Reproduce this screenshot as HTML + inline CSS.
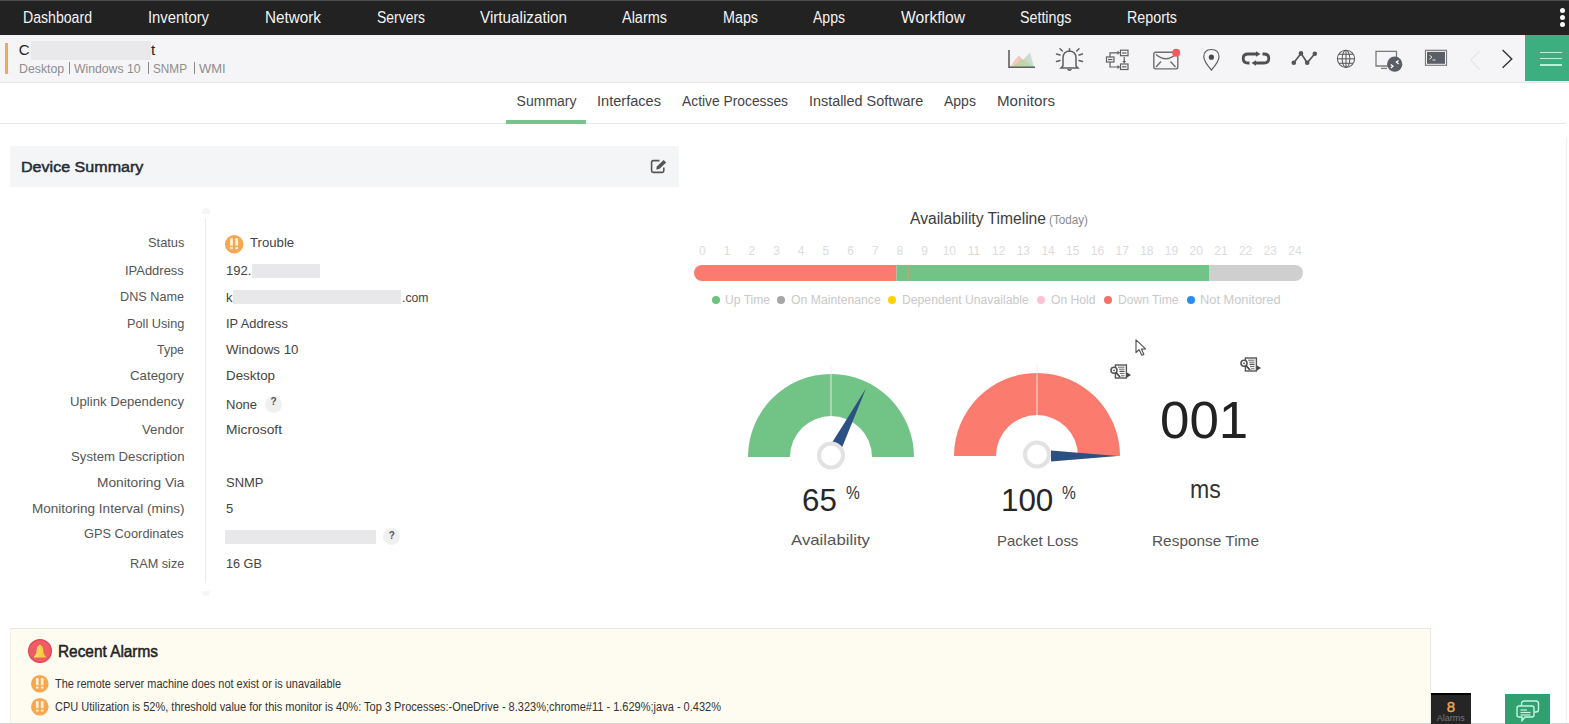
<!DOCTYPE html><html><head><meta charset="utf-8"><style>
html,body{margin:0;padding:0;}
body{width:1569px;height:724px;overflow:hidden;position:relative;background:#fff;font-family:"Liberation Sans",sans-serif;}
.t{position:absolute;white-space:nowrap;line-height:1;transform-origin:0 0;}
.r{position:absolute;}
svg{position:absolute;overflow:visible;}
</style></head><body>
<div class="r" style="left:0px;top:0px;width:1569px;height:35px;background:#222222;"></div>
<div class="r" style="left:0px;top:0px;width:1569px;height:1px;background:#4d4d4d;"></div>
<div class="t" style="left:23.00px;top:10.46px;font-size:16px;color:#f2f2f2;transform:scaleX(0.8815);">Dashboard</div>
<div class="t" style="left:148.00px;top:10.46px;font-size:16px;color:#f2f2f2;transform:scaleX(0.9269);">Inventory</div>
<div class="t" style="left:265.00px;top:10.46px;font-size:16px;color:#f2f2f2;transform:scaleX(0.9543);">Network</div>
<div class="t" style="left:377.00px;top:10.46px;font-size:16px;color:#f2f2f2;transform:scaleX(0.8707);">Servers</div>
<div class="t" style="left:480.00px;top:10.46px;font-size:16px;color:#f2f2f2;transform:scaleX(0.9527);">Virtualization</div>
<div class="t" style="left:622.00px;top:10.46px;font-size:16px;color:#f2f2f2;transform:scaleX(0.9039);">Alarms</div>
<div class="t" style="left:723.00px;top:10.46px;font-size:16px;color:#f2f2f2;transform:scaleX(0.8945);">Maps</div>
<div class="t" style="left:813.00px;top:10.46px;font-size:16px;color:#f2f2f2;transform:scaleX(0.8774);">Apps</div>
<div class="t" style="left:901.00px;top:10.46px;font-size:16px;color:#f2f2f2;transform:scaleX(0.9772);">Workflow</div>
<div class="t" style="left:1019.50px;top:10.46px;font-size:16px;color:#f2f2f2;transform:scaleX(0.8908);">Settings</div>
<div class="t" style="left:1127.00px;top:10.46px;font-size:16px;color:#f2f2f2;transform:scaleX(0.8925);">Reports</div>
<div class="r" style="left:1559.7px;top:7.8px;width:5.4px;height:5.4px;border-radius:50%;background:#fafafa"></div>
<div class="r" style="left:1559.7px;top:15.0px;width:5.4px;height:5.4px;border-radius:50%;background:#fafafa"></div>
<div class="r" style="left:1559.7px;top:21.9px;width:5.4px;height:5.4px;border-radius:50%;background:#fafafa"></div>
<div class="r" style="left:0px;top:35px;width:1569px;height:47px;background:#f5f5f7;"></div>
<div class="r" style="left:0px;top:82px;width:1569px;height:1px;background:#e6e6e8;"></div>
<div class="r" style="left:5px;top:43px;width:3px;height:31px;background:#f2a950;"></div>
<div class="t" style="left:18.70px;top:42.30px;font-size:15px;color:#222;">C</div>
<div class="r" style="left:31px;top:41px;width:120px;height:19px;background:#e9e9eb;border-radius:1px;"></div>
<div class="t" style="left:151.00px;top:42.30px;font-size:15px;color:#222;">t</div>
<div class="t" style="left:18.70px;top:61.70px;font-size:13px;color:#8e8e8e;transform:scaleX(0.9478);">Desktop</div>
<div class="t" style="left:73.90px;top:61.70px;font-size:13px;color:#8e8e8e;transform:scaleX(0.9391);">Windows 10</div>
<div class="t" style="left:153.00px;top:61.70px;font-size:13px;color:#8e8e8e;transform:scaleX(0.9052);">SNMP</div>
<div class="t" style="left:198.90px;top:61.70px;font-size:13px;color:#8e8e8e;">WMI</div>
<div class="r" style="left:68.8px;top:62px;width:1.2px;height:12px;background:#8a8a8a;"></div>
<div class="r" style="left:148px;top:62px;width:1.2px;height:12px;background:#8a8a8a;"></div>
<div class="r" style="left:194px;top:62px;width:1.2px;height:12px;background:#8a8a8a;"></div>
<div class="t" style="left:516.60px;top:94.35px;font-size:14px;color:#444;">Summary</div>
<div class="t" style="left:597.00px;top:94.35px;font-size:14px;color:#444;transform:scaleX(1.0410);">Interfaces</div>
<div class="t" style="left:681.50px;top:94.35px;font-size:14px;color:#444;transform:scaleX(0.9872);">Active Processes</div>
<div class="t" style="left:808.70px;top:94.35px;font-size:14px;color:#444;transform:scaleX(1.0271);">Installed Software</div>
<div class="t" style="left:944.00px;top:94.35px;font-size:14px;color:#444;">Apps</div>
<div class="t" style="left:996.50px;top:94.35px;font-size:14px;color:#444;transform:scaleX(1.0804);">Monitors</div>
<div class="r" style="left:0px;top:123px;width:1566px;height:1px;background:#e6e6e6;"></div>
<div class="r" style="left:506px;top:120px;width:80px;height:4px;background:#74c48b;"></div>
<div class="r" style="left:10px;top:146px;width:669px;height:41px;background:#f4f5f7;"></div>
<div class="t" style="left:21.40px;top:159.38px;font-size:15.5px;color:#262b33;transform:scaleX(1.0373);-webkit-text-stroke:0.5px #262b33;">Device Summary</div>
<div class="r" style="left:205px;top:218px;width:1px;height:365px;background:#ededed;"></div>
<div class="r" style="left:201.5px;top:208px;width:8px;height:6px;border-radius:4px 4px 0 0;background:#f6f6f6"></div>
<div class="r" style="left:201.5px;top:591px;width:8px;height:5px;border-radius:0 0 4px 4px;background:#f6f6f6"></div>
<div class="t" style="left:147.60px;top:235.60px;font-size:13px;color:#555;transform:scaleX(0.9877);">Status</div>
<div class="t" style="left:125.20px;top:264.20px;font-size:13px;color:#555;transform:scaleX(0.9964);">IPAddress</div>
<div class="t" style="left:120.00px;top:290.20px;font-size:13px;color:#555;transform:scaleX(0.9736);">DNS Name</div>
<div class="t" style="left:126.70px;top:316.80px;font-size:13px;color:#555;transform:scaleX(0.9790);">Poll Using</div>
<div class="t" style="left:157.00px;top:342.70px;font-size:13px;color:#555;transform:scaleX(0.9580);">Type</div>
<div class="t" style="left:130.00px;top:368.50px;font-size:13px;color:#555;transform:scaleX(1.0237);">Category</div>
<div class="t" style="left:70.00px;top:395.00px;font-size:13px;color:#555;transform:scaleX(1.0112);">Uplink Dependency</div>
<div class="t" style="left:142.00px;top:423.20px;font-size:13px;color:#555;transform:scaleX(1.0193);">Vendor</div>
<div class="t" style="left:70.50px;top:449.90px;font-size:13px;color:#555;transform:scaleX(1.0136);">System Description</div>
<div class="t" style="left:96.50px;top:475.70px;font-size:13px;color:#555;transform:scaleX(1.0559);">Monitoring Via</div>
<div class="t" style="left:31.50px;top:502.40px;font-size:13px;color:#555;transform:scaleX(1.0398);">Monitoring Interval (mins)</div>
<div class="t" style="left:84.30px;top:527.20px;font-size:13px;color:#555;transform:scaleX(0.9855);">GPS Coordinates</div>
<div class="t" style="left:129.70px;top:556.50px;font-size:13px;color:#555;transform:scaleX(0.9763);">RAM size</div>
<div class="t" style="left:249.60px;top:235.60px;font-size:13px;color:#444;transform:scaleX(1.0138);">Trouble</div>
<div class="t" style="left:226.00px;top:264.20px;font-size:13px;color:#444;">192.</div>
<div class="t" style="left:226.00px;top:290.70px;font-size:13px;color:#444;">k</div>
<div class="t" style="left:402.00px;top:290.70px;font-size:13px;color:#444;transform:scaleX(0.9407);">.com</div>
<div class="t" style="left:226.00px;top:316.80px;font-size:13px;color:#444;transform:scaleX(0.9867);">IP Address</div>
<div class="t" style="left:226.00px;top:342.70px;font-size:13px;color:#444;transform:scaleX(1.0239);">Windows 10</div>
<div class="t" style="left:226.00px;top:368.50px;font-size:13px;color:#444;transform:scaleX(1.0275);">Desktop</div>
<div class="t" style="left:226.00px;top:397.80px;font-size:13px;color:#444;">None</div>
<div class="t" style="left:226.00px;top:423.20px;font-size:13px;color:#444;transform:scaleX(1.0620);">Microsoft</div>
<div class="t" style="left:225.50px;top:475.70px;font-size:13px;color:#444;transform:scaleX(0.9957);">SNMP</div>
<div class="t" style="left:226.00px;top:502.40px;font-size:13px;color:#444;">5</div>
<div class="t" style="left:226.00px;top:556.50px;font-size:13px;color:#444;transform:scaleX(0.9714);">16 GB</div>
<div class="r" style="left:252px;top:264px;width:68px;height:14px;background:#e8e8ea;"></div>
<div class="r" style="left:233px;top:290px;width:168px;height:14px;background:#e8e8ea;"></div>
<div class="r" style="left:225px;top:530px;width:151px;height:14px;background:#e8e8ea;"></div>
<div class="r" style="left:265.0px;top:395.7px;width:17.0px;height:17.0px;border-radius:50%;background:#f0f0f0"></div>
<div class="t" style="left:270.45px;top:397.34px;font-size:10px;color:#555;font-weight:bold;">?</div>
<div class="r" style="left:383.2px;top:527.9px;width:17.0px;height:17.0px;border-radius:50%;background:#f0f0f0"></div>
<div class="t" style="left:388.65px;top:531.13px;font-size:10px;color:#555;font-weight:bold;">?</div>
<svg style="left:225.4px;top:234.6px" width="18.4" height="18.4" viewBox="0 0 20 20"><circle cx="10" cy="10" r="10" fill="#f7a74f"/><rect x="5.6" y="3.6" width="3" height="8" fill="#fff2d8"/><rect x="11.2" y="3.6" width="3" height="8" fill="#fff2d8"/><rect x="5.6" y="13.2" width="3" height="2.2" fill="#fff2d8"/><rect x="11.2" y="13.2" width="3" height="2.2" fill="#fff2d8"/></svg>
<svg style="left:650px;top:159px" width="19" height="15" viewBox="0 0 19 15"><path d="M9.5 1.6 H3.2 Q1.6 1.6 1.6 3.2 V11.8 Q1.6 13.4 3.2 13.4 H12.2 Q13.8 13.4 13.8 11.8 V8.5" fill="none" stroke="#555" stroke-width="1.6"/><path d="M6.2 10.6 L6.8 7.6 L13.6 0.9 L16.2 3.4 L9.3 10.1 Z" fill="#555"/></svg>
<div class="t" style="left:909.50px;top:210.96px;font-size:16px;color:#3d3d3d;transform:scaleX(0.9761);">Availability Timeline</div>
<div class="t" style="left:1049.00px;top:214.34px;font-size:12px;color:#8a8a8a;transform:scaleX(0.9746);">(Today)</div>
<div class="t" style="left:699.06px;top:244.54px;font-size:12px;color:#dcdcdc;">0</div>
<div class="t" style="left:723.75px;top:244.54px;font-size:12px;color:#dcdcdc;">1</div>
<div class="t" style="left:748.44px;top:244.54px;font-size:12px;color:#dcdcdc;">2</div>
<div class="t" style="left:773.13px;top:244.54px;font-size:12px;color:#dcdcdc;">3</div>
<div class="t" style="left:797.82px;top:244.54px;font-size:12px;color:#dcdcdc;">4</div>
<div class="t" style="left:822.51px;top:244.54px;font-size:12px;color:#dcdcdc;">5</div>
<div class="t" style="left:847.20px;top:244.54px;font-size:12px;color:#dcdcdc;">6</div>
<div class="t" style="left:871.89px;top:244.54px;font-size:12px;color:#dcdcdc;">7</div>
<div class="t" style="left:896.58px;top:244.54px;font-size:12px;color:#dcdcdc;">8</div>
<div class="t" style="left:921.27px;top:244.54px;font-size:12px;color:#dcdcdc;">9</div>
<div class="t" style="left:942.63px;top:244.54px;font-size:12px;color:#dcdcdc;">10</div>
<div class="t" style="left:967.76px;top:244.54px;font-size:12px;color:#dcdcdc;">11</div>
<div class="t" style="left:992.01px;top:244.54px;font-size:12px;color:#dcdcdc;">12</div>
<div class="t" style="left:1016.70px;top:244.54px;font-size:12px;color:#dcdcdc;">13</div>
<div class="t" style="left:1041.39px;top:244.54px;font-size:12px;color:#dcdcdc;">14</div>
<div class="t" style="left:1066.08px;top:244.54px;font-size:12px;color:#dcdcdc;">15</div>
<div class="t" style="left:1090.77px;top:244.54px;font-size:12px;color:#dcdcdc;">16</div>
<div class="t" style="left:1115.46px;top:244.54px;font-size:12px;color:#dcdcdc;">17</div>
<div class="t" style="left:1140.15px;top:244.54px;font-size:12px;color:#dcdcdc;">18</div>
<div class="t" style="left:1164.84px;top:244.54px;font-size:12px;color:#dcdcdc;">19</div>
<div class="t" style="left:1189.53px;top:244.54px;font-size:12px;color:#dcdcdc;">20</div>
<div class="t" style="left:1214.22px;top:244.54px;font-size:12px;color:#dcdcdc;">21</div>
<div class="t" style="left:1238.91px;top:244.54px;font-size:12px;color:#dcdcdc;">22</div>
<div class="t" style="left:1263.60px;top:244.54px;font-size:12px;color:#dcdcdc;">23</div>
<div class="t" style="left:1288.29px;top:244.54px;font-size:12px;color:#dcdcdc;">24</div>
<svg style="left:694px;top:265px" width="609" height="16" viewBox="0 0 609 16"><defs><clipPath id="bc"><rect x="0" y="0" width="609" height="16" rx="8"/></clipPath></defs><g clip-path="url(#bc)"><rect x="0" y="0" width="202.5" height="16" fill="#fa7b6f"/><rect x="202.5" y="0" width="313" height="16" fill="#72c386"/><rect x="213.5" y="0" width="1.2" height="16" fill="#d99a70"/><rect x="515.3" y="0" width="94" height="16" fill="#cfcfcf"/></g></svg>
<div class="r" style="left:711.7px;top:296px;width:8px;height:8px;border-radius:50%;background:#6cc17f"></div>
<div class="t" style="left:724.90px;top:293.84px;font-size:12px;color:#c9c9c9;transform:scaleX(1.0094);">Up Time</div>
<div class="r" style="left:777.4px;top:296px;width:8px;height:8px;border-radius:50%;background:#a6a6a6"></div>
<div class="t" style="left:791.20px;top:293.84px;font-size:12px;color:#c9c9c9;transform:scaleX(1.0198);">On Maintenance</div>
<div class="r" style="left:888.0px;top:296px;width:8px;height:8px;border-radius:50%;background:#ffd400"></div>
<div class="t" style="left:902.30px;top:293.84px;font-size:12px;color:#c9c9c9;transform:scaleX(1.0155);">Dependent Unavailable</div>
<div class="r" style="left:1037.0px;top:296px;width:8px;height:8px;border-radius:50%;background:#ffc3d3"></div>
<div class="t" style="left:1050.60px;top:293.84px;font-size:12px;color:#c9c9c9;transform:scaleX(1.0086);">On Hold</div>
<div class="r" style="left:1103.7px;top:296px;width:8px;height:8px;border-radius:50%;background:#f4706a"></div>
<div class="t" style="left:1117.50px;top:293.84px;font-size:12px;color:#c9c9c9;transform:scaleX(1.0080);">Down Time</div>
<div class="r" style="left:1187.0px;top:296px;width:8px;height:8px;border-radius:50%;background:#2a8ef0"></div>
<div class="t" style="left:1200.00px;top:293.84px;font-size:12px;color:#c9c9c9;transform:scaleX(1.0694);">Not Monitored</div>
<svg style="left:730.5px;top:361.6px" width="200" height="110" viewBox="0 0 200 110"><path d="M17 95 A83 83 0 0 1 183 95 L141 95 A41 41 0 0 0 59 95 Z" fill="#72c386"/><line x1="100" y1="3" x2="100" y2="54" stroke="#f0f0f0" stroke-width="1" opacity="0.9"/><path d="M101.46 80.03 L134.96 26.39 L111.26 85.02 Z" fill="#2d5082"/><circle cx="100" cy="93.5" r="12" fill="#fff" stroke="#e2e2e2" stroke-width="4"/></svg>
<svg style="left:937.3px;top:361.4px" width="200" height="110" viewBox="0 0 200 110"><path d="M17 95 A83 83 0 0 1 183 95 L141 95 A41 41 0 0 0 59 95 Z" fill="#fb7b6f"/><line x1="100" y1="3" x2="100" y2="54" stroke="#f0f0f0" stroke-width="1" opacity="0.9"/><path d="M114.00 89.50 L181.00 95.00 L114.00 100.50 Z" fill="#2d5082"/><circle cx="100" cy="93.5" r="12" fill="#fff" stroke="#e2e2e2" stroke-width="4"/></svg>
<div class="t" style="left:802.40px;top:484.31px;font-size:32px;color:#262626;transform:scaleX(0.9777);">65</div>
<div class="t" style="left:846.00px;top:484.26px;font-size:18px;color:#333;transform:scaleX(0.8623);">%</div>
<div class="t" style="left:1001.00px;top:484.31px;font-size:32px;color:#262626;transform:scaleX(0.9795);">100</div>
<div class="t" style="left:1062.40px;top:484.26px;font-size:18px;color:#333;transform:scaleX(0.8623);">%</div>
<div class="t" style="left:791.30px;top:532.30px;font-size:15px;color:#555;transform:scaleX(1.1191);">Availability</div>
<div class="t" style="left:996.70px;top:532.70px;font-size:15px;color:#555;transform:scaleX(0.9950);">Packet Loss</div>
<div class="t" style="left:1160.30px;top:393.98px;font-size:52px;color:#222;transform:scaleX(1.0177);">001</div>
<div class="t" style="left:1189.80px;top:476.29px;font-size:26px;color:#333;transform:scaleX(0.8887);">ms</div>
<div class="t" style="left:1151.70px;top:533.20px;font-size:15px;color:#555;transform:scaleX(1.0267);">Response Time</div>
<svg style="left:1109.5px;top:364px" width="22" height="16" viewBox="0 0 22 16"><rect x="5.4" y="1" width="11" height="13" fill="#fff" stroke="#555" stroke-width="1.4"/><g stroke="#555" stroke-width="0.9"><line x1="8" y1="3.2" x2="14.5" y2="3.2"/><line x1="9" y1="5.2" x2="14.5" y2="5.2"/><line x1="9.5" y1="7.4" x2="14.5" y2="7.4" stroke-width="1.4"/><line x1="10" y1="9.6" x2="14.5" y2="9.6"/><line x1="11" y1="11.8" x2="14.5" y2="11.8"/></g><circle cx="4" cy="6.3" r="3" fill="#fff" stroke="#555" stroke-width="1.6"/><circle cx="4" cy="6.3" r="0.9" fill="#555"/><line x1="6" y1="8.5" x2="10" y2="13" stroke="#444" stroke-width="1.8"/><path d="M17 8.5 L21 11 L17 13.5 Z" fill="#444"/></svg>
<svg style="left:1239.5px;top:357px" width="22" height="16" viewBox="0 0 22 16"><rect x="5.4" y="1" width="11" height="13" fill="#fff" stroke="#555" stroke-width="1.4"/><g stroke="#555" stroke-width="0.9"><line x1="8" y1="3.2" x2="14.5" y2="3.2"/><line x1="9" y1="5.2" x2="14.5" y2="5.2"/><line x1="9.5" y1="7.4" x2="14.5" y2="7.4" stroke-width="1.4"/><line x1="10" y1="9.6" x2="14.5" y2="9.6"/><line x1="11" y1="11.8" x2="14.5" y2="11.8"/></g><circle cx="4" cy="6.3" r="3" fill="#fff" stroke="#555" stroke-width="1.6"/><circle cx="4" cy="6.3" r="0.9" fill="#555"/><line x1="6" y1="8.5" x2="10" y2="13" stroke="#444" stroke-width="1.8"/><path d="M17 8.5 L21 11 L17 13.5 Z" fill="#444"/></svg>
<svg style="left:1135px;top:339px" width="13" height="18" viewBox="0 0 12 17"><path d="M0.8 0.8 L0.8 12.8 L3.8 10.2 L6.3 15.3 L8.2 14.5 L5.9 9.6 L9.8 9.4 Z" fill="#fff" stroke="#555" stroke-width="1.1" stroke-linejoin="round"/></svg>
<div class="r" style="left:1566px;top:137px;width:1px;height:587px;background:#f0f0f0;"></div>
<div class="r" style="left:10px;top:628px;width:1421px;height:96px;background:#fefbf0;border-top:1px solid #ebe7da;border-left:1px solid #f3efe4;border-right:1px solid #eeeae0;box-sizing:border-box;"></div>
<svg style="left:27.5px;top:638.5px" width="24" height="24" viewBox="0 0 24 24"><circle cx="12" cy="12" r="11.4" fill="#ee5c66" stroke="#df4450" stroke-width="1.2"/><defs><linearGradient id="bg2" x1="0" y1="0" x2="1" y2="0"><stop offset="0" stop-color="#fbe07a"/><stop offset="1" stop-color="#f6c21c"/></linearGradient></defs><path d="M11.2 5.9 Q12 4.9 12.8 5.9 L13 6.5 Q15 7.1 15.2 10 L15.6 14 Q16.2 16.3 18 17.4 L18 18.4 L6 18.4 L6 17.4 Q7.8 16.3 8.4 14 L8.8 10 Q9 7.1 11 6.5 Z" fill="url(#bg2)"/></svg>
<div class="t" style="left:58.30px;top:644.06px;font-size:16px;color:#222;transform:scaleX(0.9611);-webkit-text-stroke:0.5px #222;">Recent Alarms</div>
<svg style="left:31.2px;top:675.2px" width="17.6" height="17.6" viewBox="0 0 20 20"><circle cx="10" cy="10" r="10" fill="#f7a74f"/><rect x="5.6" y="3.6" width="3" height="8" fill="#fff2d8"/><rect x="11.2" y="3.6" width="3" height="8" fill="#fff2d8"/><rect x="5.6" y="13.2" width="3" height="2.2" fill="#fff2d8"/><rect x="11.2" y="13.2" width="3" height="2.2" fill="#fff2d8"/></svg>
<svg style="left:31.2px;top:698.2px" width="17.6" height="17.6" viewBox="0 0 20 20"><circle cx="10" cy="10" r="10" fill="#f7a74f"/><rect x="5.6" y="3.6" width="3" height="8" fill="#fff2d8"/><rect x="11.2" y="3.6" width="3" height="8" fill="#fff2d8"/><rect x="5.6" y="13.2" width="3" height="2.2" fill="#fff2d8"/><rect x="11.2" y="13.2" width="3" height="2.2" fill="#fff2d8"/></svg>
<div class="t" style="left:55.40px;top:677.54px;font-size:12px;color:#333;transform:scaleX(0.9104);">The remote server machine does not exist or is unavailable</div>
<div class="t" style="left:55.40px;top:701.04px;font-size:12px;color:#333;transform:scaleX(0.9183);">CPU Utilization is 52%, threshold value for this monitor is 40%: Top 3 Processes:-OneDrive - 8.323%;chrome#11 - 1.629%;java - 0.432%</div>
<div class="r" style="left:0px;top:723px;width:1569px;height:1px;background:#d5d5d5;"></div>
<div class="r" style="left:1431px;top:693px;width:40px;height:31px;background:#252525;border-top:2px solid #000;box-sizing:border-box;"></div>
<div class="t" style="left:1446.63px;top:698.50px;font-size:15px;color:#f5a54a;-webkit-text-stroke:0.4px #f5a54a;">8</div>
<div class="t" style="left:1436.80px;top:714.38px;font-size:9px;color:#777;">Alarms</div>
<div class="r" style="left:1504.6px;top:694px;width:45.4px;height:30px;background:#30a070;"></div>
<svg style="left:1515px;top:700px" width="26" height="24" viewBox="0 0 26 24"><rect x="6.5" y="1" width="17" height="11" rx="2.5" fill="none" stroke="#c9f3de" stroke-width="1.4"/><path d="M4 6 H17 Q19 6 19 8 V15 Q19 17 17 17 H10 L7 20.5 L7 17 H4 Q2 17 2 15 V8 Q2 6 4 6 Z" fill="#30a070" stroke="#c9f3de" stroke-width="1.4"/><line x1="5.5" y1="10" x2="12" y2="10" stroke="#c9f3de" stroke-width="1.2"/><line x1="5.5" y1="12.5" x2="15.5" y2="12.5" stroke="#c9f3de" stroke-width="1.2"/><line x1="5.5" y1="15" x2="15.5" y2="15" stroke="#c9f3de" stroke-width="1.2"/></svg>
<svg style="left:1005px;top:46px" width="34" height="25" viewBox="1005 46 34 25"><defs><linearGradient id="ga" x1="0" y1="0" x2="1" y2="0"><stop offset="0" stop-color="#e9d9b0"/><stop offset="0.4" stop-color="#f2b9b0"/><stop offset="1" stop-color="#a8e8d0"/></linearGradient></defs><path d="M1010 67 L1014 61 L1019 55.5 L1023 60 L1030 52.5 L1034 67 Z" fill="url(#ga)" opacity="0.85"/><path d="M1012 67 L1023 59 L1034 67 Z" fill="#b5d7a8" opacity="0.8"/><path d="M1009 50 V67.3 H1035" fill="none" stroke="#5f5f5f" stroke-width="1.6"/></svg>
<svg style="left:1054px;top:46px" width="32" height="26" viewBox="1054 46 32 26"><g fill="none" stroke="#5f5f5f" stroke-width="1.5" stroke-linecap="round"><path d="M1063 66 V58 Q1063 51.5 1069.5 51 Q1076 51.5 1076 58 V66 L1078 68 H1061 Z"/><line x1="1069.5" y1="48.8" x2="1069.5" y2="51"/><path d="M1068 69.5 Q1069.5 71 1071 69.5"/><line x1="1060" y1="48.8" x2="1062.3" y2="51"/><line x1="1079" y1="48.8" x2="1076.7" y2="51"/><line x1="1056.5" y1="54" x2="1060" y2="55"/><line x1="1082.5" y1="54" x2="1079" y2="55"/><line x1="1056.5" y1="61.5" x2="1060" y2="60.5"/><line x1="1082.5" y1="61.5" x2="1079" y2="60.5"/></g></svg>
<svg style="left:1104px;top:47px" width="28" height="26" viewBox="1104 47 28 26"><g fill="none" stroke="#5f5f5f" stroke-width="1.2"><rect x="1106.5" y="57" width="7.5" height="5"/><rect x="1120.5" y="50.2" width="7.5" height="5.5"/><rect x="1120.5" y="64" width="7.5" height="5.5"/><path d="M1110 57 V52.8 H1118"/><path d="M1110 62 V67 H1118"/><line x1="1124.2" y1="57" x2="1124.2" y2="61.5"/><line x1="1108" y1="59.5" x2="1112.5" y2="59.5"/><line x1="1122" y1="53" x2="1126.5" y2="53"/><line x1="1122" y1="66.8" x2="1126.5" y2="66.8"/></g><g fill="#5f5f5f"><path d="M1117.5 50.8 L1120.2 52.8 L1117.5 54.8 Z"/><path d="M1117.5 65 L1120.2 67 L1117.5 69 Z"/><path d="M1122.3 61 L1126.1 61 L1124.2 63.5 Z"/></g></svg>
<svg style="left:1150px;top:46px" width="34" height="26" viewBox="1150 46 34 26"><g fill="none" stroke="#5f5f5f" stroke-width="1.4" opacity="0.9"><rect x="1153.8" y="52.3" width="24" height="16.6" rx="1.8"/><path d="M1156 54.5 Q1166 63 1175.5 54.5"/><line x1="1156" y1="67" x2="1161" y2="61.5"/><line x1="1175.5" y1="67" x2="1170.5" y2="61.5"/></g><circle cx="1176.2" cy="52.8" r="4" fill="#f55a63"/></svg>
<svg style="left:1200px;top:46px" width="24" height="27" viewBox="1200 46 24 27"><path d="M1211.4 70 Q1203.8 61.5 1203.8 56.8 Q1203.8 49.5 1211.4 49.5 Q1219 49.5 1219 56.8 Q1219 61.5 1211.4 70 Z" fill="none" stroke="#5f5f5f" stroke-width="1.2"/><circle cx="1211.4" cy="57.2" r="2.6" fill="#4a4a4a"/></svg>
<svg style="left:1238px;top:48px" width="36" height="20" viewBox="1238 48 36 20"><g fill="none" stroke="#4f4f4f" stroke-width="2.8"><path d="M1257 54 H1248 Q1243.2 54 1243.2 58.5 Q1243.2 63 1248 63 H1249.5"/><path d="M1255 63 H1264 Q1268.8 63 1268.8 58.5 Q1268.8 54 1264 54 H1262.5"/></g><g fill="#4f4f4f"><path d="M1256 51.2 L1260.5 54 L1256 56.8 Z"/><path d="M1256 60.2 L1251.5 63 L1256 65.8 Z"/></g></svg>
<svg style="left:1290px;top:50px" width="28" height="16" viewBox="1290 50 28 16"><polyline points="1293.8,62.8 1301,53.4 1307.2,62.8 1314.8,53.8" fill="none" stroke="#555" stroke-width="1.6"/><g fill="#555"><circle cx="1293.8" cy="62.8" r="2.3"/><circle cx="1301" cy="53.4" r="2.3"/><circle cx="1307.2" cy="62.8" r="2.3"/><circle cx="1314.8" cy="53.8" r="2.3"/></g></svg>
<svg style="left:1336px;top:49px" width="20" height="20" viewBox="1336 49 20 20"><g fill="none" stroke="#5f5f5f" stroke-width="1.1"><circle cx="1346" cy="58.8" r="8.6"/><ellipse cx="1346" cy="58.8" rx="3.8" ry="8.6"/><line x1="1346" y1="50.2" x2="1346" y2="67.4"/><line x1="1337.6" y1="58.8" x2="1354.4" y2="58.8"/><path d="M1339 54.3 H1353"/><path d="M1339 63.3 H1353"/></g></svg>
<svg style="left:1373px;top:48px" width="32" height="26" viewBox="1373 48 32 26"><g fill="none" stroke="#7a7a7a" stroke-width="1.3"><path d="M1388 66 H1376 V51.3 H1396.5 V58"/><line x1="1381" y1="68.4" x2="1387" y2="68.4"/></g><circle cx="1394.7" cy="64.2" r="7.6" fill="#5a5d63"/><g fill="none" stroke="#fff" stroke-width="1.3"><path d="M1390.8 64.5 L1393 66.2 L1390.8 68"/><path d="M1398.6 60.4 L1396.4 62.1 L1398.6 63.9"/></g></svg>
<svg style="left:1424px;top:48px" width="25" height="20" viewBox="1424 48 25 20"><rect x="1425.5" y="50.3" width="21" height="15" fill="#fff" stroke="#7a7a7a" stroke-width="1.2"/><rect x="1427" y="51.8" width="18" height="12" fill="#5b5e66"/><path d="M1429.5 55.2 L1432 57.2 L1429.5 59.2" fill="none" stroke="#e8e8e8" stroke-width="1"/><line x1="1432.5" y1="60" x2="1435.5" y2="60" stroke="#e8e8e8" stroke-width="1"/></svg>
<svg style="left:1466px;top:48px" width="52" height="24" viewBox="1466 48 52 24"><path d="M1479.5 51.3 L1470.8 60.2 L1479.5 69.2" fill="none" stroke="#e6e6e8" stroke-width="1.3"/><path d="M1502.6 50 L1511.8 58.9 L1502.6 67.8" fill="none" stroke="#333" stroke-width="1.4"/></svg>
<div class="r" style="left:1525px;top:35px;width:44px;height:46px;background:#3dae80;"></div>
<div class="r" style="left:1540px;top:51.7px;width:21.5px;height:1.5px;background:#b8f2d6;"></div>
<div class="r" style="left:1540px;top:57.8px;width:21.5px;height:1.5px;background:#b8f2d6;"></div>
<div class="r" style="left:1540px;top:64.2px;width:21.5px;height:1.5px;background:#b8f2d6;"></div>
</body></html>
